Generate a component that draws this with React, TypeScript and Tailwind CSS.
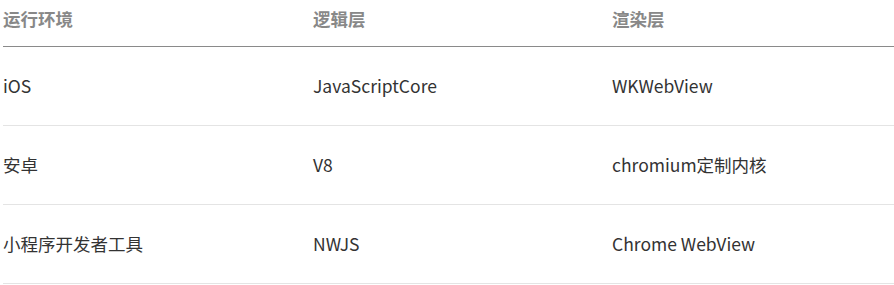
import React from 'react';

const rows = [
  { env: 'iOS', logic: 'JavaScriptCore', render: 'WKWebView' },
  { env: '安卓', logic: 'V8', render: 'chromium定制内核' },
  { env: '小程序开发者工具', logic: 'NWJS', render: 'Chrome WebView' },
];

const cols = 'grid grid-cols-[310px_299px_281px]';

const App = () => {
  return (
    <div
      className="w-[894px] h-[285px] bg-white pl-[3px] text-[17.5px] overflow-hidden"
      style={{ fontFamily: '"Noto Sans CJK SC", "Noto Sans", sans-serif' }}
    >
      <div className={`${cols} h-[47px] border-b border-[#8a8a8a] font-bold text-[#888888] items-start pt-[6px]`}>
        <div>运行环境</div>
        <div>逻辑层</div>
        <div>渲染层</div>
      </div>
      {rows.map((row, index) => (
        <div
          key={index}
          className={`${cols} h-[79px] border-b border-[#e4e4e4] items-center text-[#333333]`}
        >
          <div>{row.env}</div>
          <div>{row.logic}</div>
          <div>{row.render}</div>
        </div>
      ))}
    </div>
  );
};

export default App;
